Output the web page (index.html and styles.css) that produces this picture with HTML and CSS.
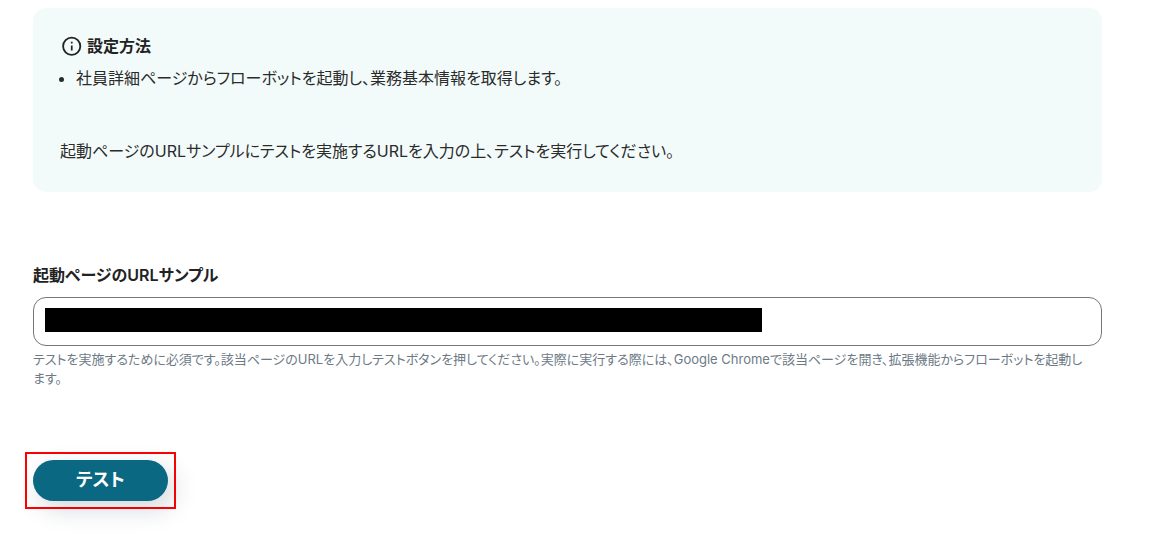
FILE: index.html
```html
<!DOCTYPE html>
<html lang="ja">
<head>
<meta charset="utf-8">
<title>フローボット テスト</title>
<link rel="stylesheet" href="styles.css">
</head>
<body>
<main class="page">
  <section class="guide">
    <h2 class="guide-title">
      <svg class="guide-icon" viewBox="0 0 24 24" aria-hidden="true">
        <circle cx="11.7" cy="12.3" r="8.6" fill="none" stroke="currentColor" stroke-width="1.8"/>
        <path d="M10.9 11.5h1.7v5h-1.7zM10.9 7.8h1.7v1.8h-1.7z" fill="currentColor"/>
      </svg>
      <span>設定方法</span>
    </h2>
    <ul class="guide-list">
      <li>社員詳細ページからフローボットを起動し、業務基本情報を取得します。</li>
    </ul>
    <p class="guide-note">起動ページのURLサンプルにテストを実施するURLを入力の上、テストを実行してください。</p>
  </section>
  <form class="form">
    <label class="field-label" for="sample-url">起動ページのURLサンプル</label>
    <div class="field">
      <input class="field-input" id="sample-url" type="text" aria-describedby="sample-url-help">
      <span class="redaction"></span>
    </div>
    <p class="field-help" id="sample-url-help">テストを実施するために必須です。該当ページのURLを入力しテストボタンを押してください。実際に実行する際には、Google Chromeで該当ページを開き、拡張機能からフローボットを起動します。</p>
    <div class="highlight">
      <button class="test-button" type="button">テスト</button>
    </div>
  </form>
</main>
</body>
</html>
```
FILE: styles.css
```css
* {
  box-sizing: border-box;
}

body {
  margin: 0;
  background: #fff;
  color: #222;
  font-family: Inter, "Noto Sans CJK JP", sans-serif;
  font-size: 16px;
  line-height: 24px;
  font-feature-settings: "palt";
}

.page {
  padding: 8px 56px 40px 33px;
}

.guide {
  padding: 26px 27px 29px;
  border-radius: 13px;
  background: #f2fbfa;
}

.guide-title {
  display: flex;
  align-items: center;
  gap: 3px;
  margin: 0;
  font-size: 16px;
  font-weight: 600;
}

.guide-icon {
  width: 24px;
  height: 24px;
}

.guide-list {
  margin: 8px 0 49px;
  padding-left: 16px;
  color: #2b2b2b;
}

.guide-note {
  margin: 0;
  color: #2b2b2b;
}

.field-label {
  display: block;
  margin-top: 71px;
  font-weight: 600;
}

.field {
  position: relative;
  margin-top: 10px;
}

.field-input {
  display: block;
  width: 100%;
  height: 49px;
  padding: 0 12px;
  border: 1px solid #767676;
  border-radius: 13px;
  background: #fff;
  color: inherit;
  font: inherit;
}

.redaction {
  position: absolute;
  top: 11px;
  left: 12px;
  width: 717px;
  max-width: calc(100% - 24px);
  height: 24px;
  background: #000;
}

.field-help {
  margin: 4px 0 0;
  padding-right: 12px;
  color: #6d7a86;
  font-size: 13px;
  line-height: 19px;
}

.highlight {
  width: fit-content;
  margin: 64px 0 0 -8px;
  padding: 6px;
  border: 2px solid #f00;
}

.test-button {
  display: block;
  padding: 6px 43px 8px;
  border: 0;
  border-radius: 21px;
  background: #0b6882;
  box-shadow: 6px 8px 24px rgba(20, 40, 60, 0.18);
  color: #fff;
  font-family: inherit;
  font-size: 18px;
  font-weight: 700;
  line-height: 27px;
  font-feature-settings: inherit;
}
```
